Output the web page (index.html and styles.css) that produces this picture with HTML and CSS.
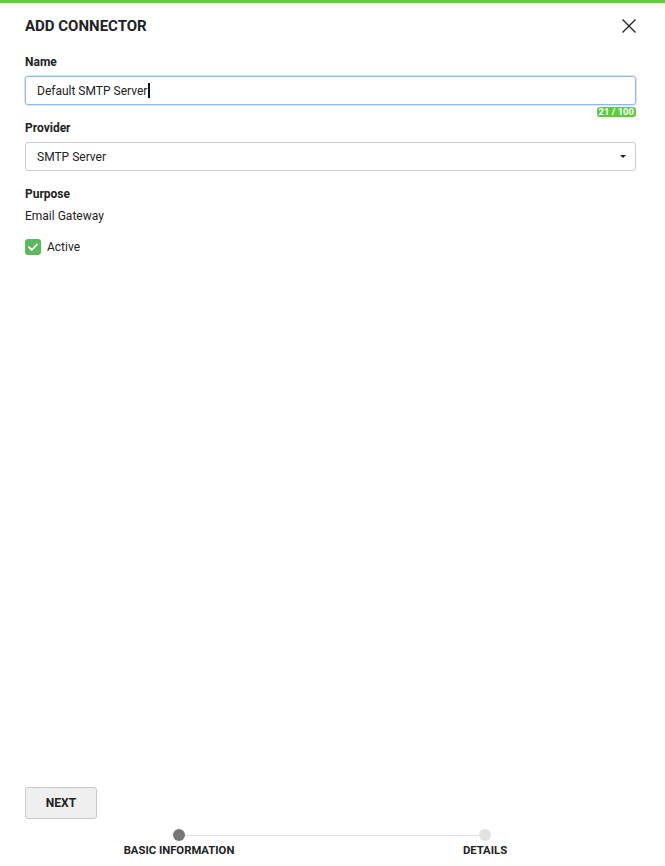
FILE: index.html
```html
<!DOCTYPE html>
<html lang="en">
<head>
<meta charset="utf-8">
<title>Add Connector</title>
<link rel="stylesheet" href="styles.css">
</head>
<body>
<div class="page">
  <div class="topbar"></div>
  <div class="content">
    <div class="header">
      <h1 class="title">ADD CONNECTOR</h1>
      <button class="close" aria-label="Close">
        <svg width="16" height="16" viewBox="0 0 16 16"><path d="M1.5 1.5 L14.5 14.5 M14.5 1.5 L1.5 14.5" stroke="#222" stroke-width="1.3" fill="none"/></svg>
      </button>
    </div>

    <div class="field">
      <div class="label">Name</div>
      <div class="input focused"><span class="value">Default SMTP Server</span><span class="caret-line"></span></div>
      <div class="counter-row"><span class="counter">21 / 100</span></div>
    </div>

    <div class="field field-provider">
      <div class="label">Provider</div>
      <div class="input select"><span class="value">SMTP Server</span><span class="arrow"></span></div>
    </div>

    <div class="field field-purpose">
      <div class="label">Purpose</div>
      <div class="static">Email Gateway</div>
    </div>

    <label class="check">
      <span class="box"><svg width="12" height="12" viewBox="0 0 12 12"><path d="M2 6.2 L4.8 9 L10 3.4" stroke="#fff" stroke-width="1.8" fill="none" stroke-linecap="round" stroke-linejoin="round"/></svg></span>
      <span class="check-text">Active</span>
    </label>
  </div>

  <div class="footer">
    <button class="btn">NEXT</button>
    <div class="stepper">
      <div class="step active">
        <span class="dot"></span>
        <span class="step-label">BASIC INFORMATION</span>
      </div>
      <div class="step">
        <span class="dot"></span>
        <span class="step-label">DETAILS</span>
      </div>
    </div>
  </div>
</div>
</body>
</html>
```
FILE: styles.css
```css
* { box-sizing: border-box; }
html, body { margin: 0; padding: 0; }
body {
  font-family: Roboto, "Liberation Sans", Arial, sans-serif;
  color: #222;
  background: #fff;
}
.page {
  height: 866px;
  display: flex;
  flex-direction: column;
}
.topbar {
  height: 3px;
  background: #5ccb3c;
  flex: none;
}
.content {
  flex: 1;
  padding: 0 29px 0 25px;
}
.header {
  display: flex;
  align-items: center;
  justify-content: space-between;
  height: 46px;
  padding-top: 0;
}
.title {
  margin: 0;
  font-size: 15px;
  font-weight: 700;
  line-height: 20px;
  color: #222;
}
.close {
  border: 0;
  background: none;
  padding: 0;
  width: 16px;
  height: 16px;
  margin-right: -1px;
  display: flex;
}
.field { margin-top: 5px; }
.label {
  font-size: 12px;
  font-weight: 700;
  line-height: 16px;
  color: #222;
}
.input {
  margin-top: 6px;
  height: 29px;
  border: 1px solid #ccc;
  border-radius: 3px;
  display: flex;
  align-items: center;
  padding: 0 11px;
  font-size: 12px;
  color: #222;
  position: relative;
}
.input.focused {
  border-color: #8fb8ee;
  box-shadow: 0 0 0 1px rgba(143, 184, 238, 0.35);
}
.caret-line {
  display: inline-block;
  width: 2px;
  height: 15px;
  background: #111;
  margin-left: 1px;
}
.counter-row {
  display: flex;
  justify-content: flex-end;
  margin-top: 2px;
}
.counter {
  background: #5ccb3c;
  color: #fff;
  font-size: 9.5px;
  font-weight: 700;
  line-height: 10px;
  padding: 0 2px;
  border-radius: 3px;
}
.field-provider { margin-top: 3px; }
.select { margin-top: 6px; height: 29px; justify-content: space-between; padding-right: 9px; }
.arrow {
  width: 0;
  height: 0;
  border-left: 3.5px solid transparent;
  border-right: 3.5px solid transparent;
  border-top: 3.5px solid #222;
}
.field-purpose { margin-top: 15px; }
.static {
  margin-top: 6px;
  font-size: 12px;
  line-height: 16px;
}
.check {
  display: flex;
  align-items: center;
  margin-top: 15px;
  gap: 6px;
}
.box {
  width: 16px;
  height: 16px;
  border-radius: 3px;
  background: #5cb85c;
  display: flex;
  align-items: center;
  justify-content: center;
}
.check-text { font-size: 12px; line-height: 16px; }
.footer {
  flex: none;
  padding: 0 27px 0 25px;
}
.btn {
  width: 72px;
  height: 32px;
  background: #efefef;
  border: 1px solid #c8c8c8;
  border-radius: 3px;
  font-family: inherit;
  font-size: 12px;
  font-weight: 700;
  color: #222;
  padding: 0;
}
.stepper {
  display: grid;
  grid-template-columns: 1fr 1fr;
  margin-top: 10px;
  margin-left: 1px;
  height: 37px;
  position: relative;
}
.step {
  display: flex;
  flex-direction: column;
  align-items: center;
  position: relative;
}
.step.active::after {
  content: "";
  position: absolute;
  top: 6px;
  left: 50%;
  width: 100%;
  height: 1px;
  background: #e0e0e0;
}
.dot {
  width: 12px;
  height: 12px;
  border-radius: 50%;
  background: #e3e3e3;
  position: relative;
  z-index: 1;
}
.step.active .dot { background: #777; }
.step-label {
  margin-top: 3px;
  font-size: 11.3px;
  font-weight: 700;
  line-height: 13px;
  color: #222;
}
```
